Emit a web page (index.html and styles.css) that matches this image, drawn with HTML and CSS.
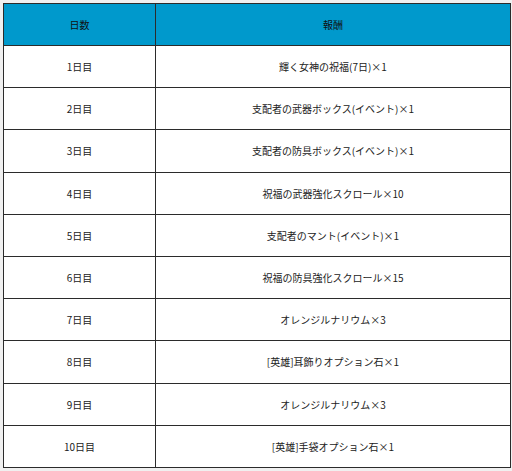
FILE: index.html
```html
<!DOCTYPE html>
<html lang="ja">
<head>
<meta charset="utf-8">
<link rel="stylesheet" href="styles.css">
</head>
<body>
<div class="wrap">
<table class="rewards">
<thead>
<tr><th class="col-day">日数</th><th class="col-reward">報酬</th></tr>
</thead>
<tbody>
<tr><td>1日目</td><td>輝く女神の祝福(7日)×1</td></tr>
<tr><td>2日目</td><td>支配者の武器ボックス(イベント)×1</td></tr>
<tr><td>3日目</td><td>支配者の防具ボックス(イベント)×1</td></tr>
<tr><td>4日目</td><td>祝福の武器強化スクロール×10</td></tr>
<tr><td>5日目</td><td>支配者のマント(イベント)×1</td></tr>
<tr><td>6日目</td><td>祝福の防具強化スクロール×15</td></tr>
<tr><td>7日目</td><td>オレンジルナリウム×3</td></tr>
<tr><td>8日目</td><td>[英雄]耳飾りオプション石×1</td></tr>
<tr><td>9日目</td><td>オレンジルナリウム×3</td></tr>
<tr><td>10日目</td><td>[英雄]手袋オプション石×1</td></tr>
</tbody>
</table>
</div>
</body>
</html>
```
FILE: styles.css
```css
html, body {
  margin: 0;
  padding: 0;
  background: #f0f0f0;
}
.wrap {
  padding: 3px 2px 3px 3px;
}
.rewards {
  width: 508px;
  border-collapse: collapse;
  background: #ffffff;
  font-family: "Noto Sans CJK JP", "Noto Sans", sans-serif;
  font-size: 10px;
  color: #222222;
}
.rewards th,
.rewards td {
  border: 1px solid #2b2b2b;
  text-align: center;
  vertical-align: middle;
  padding: 0;
  height: 41px;
  font-weight: normal;
}
.rewards th {
  background: #0099cc;
  color: #111111;
}
.rewards tbody td {
  height: 41.2px;
}
.col-day {
  width: 151px;
}
```
